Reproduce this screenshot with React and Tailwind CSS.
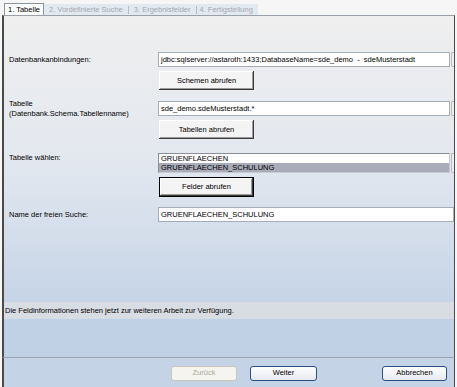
import React from "react";

const classicBtn =
  "flex items-center justify-center bg-[#f4f4f4] text-[#000] shadow-[inset_-1px_-1px_0_#3a3a3a,inset_1px_1px_0_#ffffff,inset_-2px_-2px_0_#9a9a9a]";

function Combo({ value }) {
  return (
    <div className="flex h-[15px] w-[296px] items-stretch">
      <div className="flex flex-1 items-center border border-[#a5adb8] bg-white pl-[2px] whitespace-pre">
        {value}
      </div>
      <div className="ml-[1px] w-[3px] rounded-l-[2px] border border-r-0 border-[#b5bcc6] bg-[#eef0f3]" />
    </div>
  );
}

export default function App() {
  return (
    <div
      className="flex h-[387px] w-[457px] flex-col overflow-hidden bg-[#f6f6f6] text-[7.5px] leading-none text-black"
      style={{ fontFamily: '"Liberation Sans", Arial, sans-serif' }}
    >
      {/* Tab strip */}
      <div className="flex h-[15px] items-end pl-[4px]">
        <div className="flex h-[12px] items-center border border-b-0 border-[#8c949c] bg-[#fdfdfd] px-[3px]">
          1. Tabelle
        </div>
        <div className="flex h-[11px] w-[214px] items-center bg-[#e3e9f1] text-[#a4a8ae]">
          <span className="px-[5px]">2. Vordefinierte Suche</span>
          <span className="h-[8px] w-px bg-[#b8bec6]" />
          <span className="px-[5px]">3. Ergebnisfelder</span>
          <span className="h-[8px] w-px bg-[#b8bec6]" />
          <span className="px-[3px]">4. Fertigstellung</span>
        </div>
      </div>

      {/* Main panel */}
      <div className="ml-[2px] flex h-[287px] w-[453px] flex-col border-t border-l-2 border-r border-[#4a4a4a] border-t-[#9aa0a8] bg-linear-to-b from-[#efefef] via-[#e3e8ef] to-[#c6d4e7] pt-[36px]">
        <div className="grid grid-cols-[149px_1fr] items-center pl-[5px]">
          <div>Datenbankanbindungen:</div>
          <Combo value="jdbc:sqlserver://astaroth:1433;DatabaseName=sde_demo  -  sdeMusterstadt" />

          <div />
          <div className={`${classicBtn} mt-[4px] ml-px h-[19px] w-[95px]`}>Schemen abrufen</div>

          <div className="mt-[11px] flex h-[15px] flex-col justify-center leading-[10px]">
            <div>Tabelle</div>
            <div>(Datenbank.Schema.Tabellenname)</div>
          </div>
          <div className="mt-[11px]">
            <Combo value="sde_demo.sdeMusterstadt.*" />
          </div>

          <div />
          <div className={`${classicBtn} mt-[4px] ml-px h-[19px] w-[95px]`}>Tabellen abrufen</div>

          <div className="mt-[14px] self-start pt-[1px]">Tabelle wählen:</div>
          <div className="mt-[14px] flex h-[20px] w-[296px]">
            <div className="flex flex-1 flex-col border border-[#8a8f97] border-r-[#c8ccd2] border-b-[#c8ccd2] bg-white">
              <div className="flex h-[9px] items-center pl-[2px]">GRUENFLAECHEN</div>
              <div className="flex h-[9px] items-center bg-[#a9acb8] pl-[2px]">GRUENFLAECHEN_SCHULUNG</div>
            </div>
            <div className="ml-[1px] w-[3px] rounded-l-[2px] border border-r-0 border-[#b5bcc6] bg-[#eef0f3]" />
          </div>

          <div />
          <div className="mt-[4px] ml-px flex h-[20px] w-[95px] items-center justify-center border border-black bg-[#f4f4f4] shadow-[inset_-1px_-1px_0_#3a3a3a,inset_1px_1px_0_#ffffff,inset_-2px_-2px_0_#9a9a9a]">
            Felder abrufen
          </div>

          <div className="mt-[10px]">Name der freien Suche:</div>
          <div className="mt-[10px] flex h-[15px] w-[296px] items-center border border-[#a5adb8] bg-white pl-[2px]">
            GRUENFLAECHEN_SCHULUNG
          </div>
        </div>
      </div>

      {/* Status */}
      <div className="ml-[2px] flex h-[17px] w-[453px] items-center border-l-2 border-r border-[#4a4a4a] bg-[#d8dce3] pl-px">
        Die Feldinformationen stehen jetzt zur weiteren Arbeit zur Verfügung.
      </div>

      {/* Blue spacer */}
      <div className="ml-[2px] h-[38px] w-[453px] border-l-2 border-r border-[#4a4a4a] bg-[#c1d1e5]" />

      {/* Button bar */}
      <div className="ml-[2px] flex h-[30px] w-[453px] items-center border-t border-l-2 border-r border-[#4a4a4a] border-t-[#9aa4b2] bg-[#c4d3e6] pt-[1px] pl-[167px]">
        <div className="flex h-[15px] w-[66px] items-center justify-center rounded-[3px] border border-[#c9c7ba] bg-[#f5f4ee] text-[#aca899]">
          Zurück
        </div>
        <div className="ml-[13px] flex h-[15px] w-[67px] items-center justify-center rounded-[3px] border border-[#2b4f7e] bg-linear-to-b from-white to-[#e6e9f0]">
          Weiter
        </div>
        <div className="ml-[65px] flex h-[15px] w-[65px] items-center justify-center rounded-[3px] border border-[#2b4f7e] bg-linear-to-b from-white to-[#e6e9f0]">
          Abbrechen
        </div>
      </div>
    </div>
  );
}
